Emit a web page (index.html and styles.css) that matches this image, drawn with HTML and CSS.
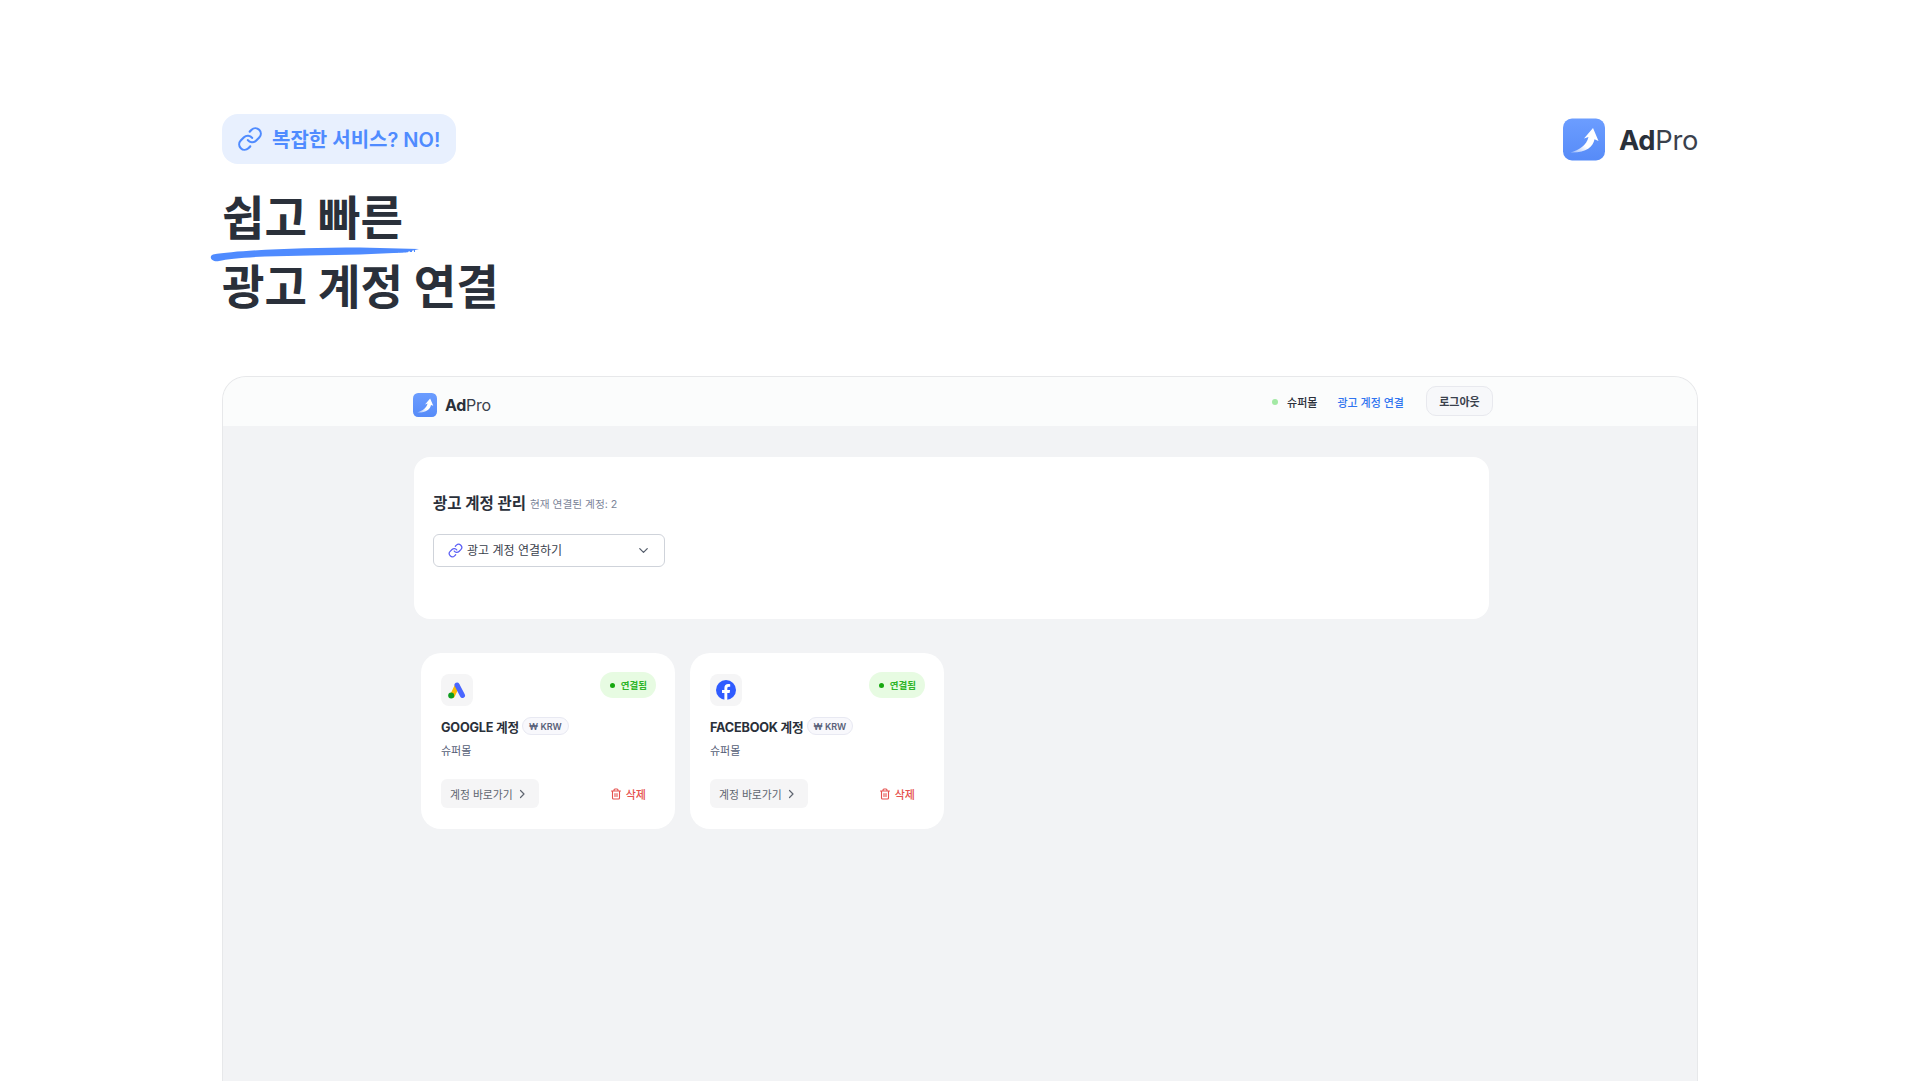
FILE: index.html
```html
<!DOCTYPE html>
<html lang="ko">
<head>
    <meta charset="UTF-8">
    <meta name="viewport" content="width=device-width, initial-scale=1.0">
    <title>AdPro</title>
    <link rel="stylesheet" href="styles.css">
</head>
<body>
    <svg width="0" height="0" class="defs">
        <defs>
            <linearGradient id="tile" x1="0" y1="0" x2="0" y2="1">
                <stop offset="0" stop-color="#6c9dff"/>
                <stop offset="1" stop-color="#568bf8"/>
            </linearGradient>
            <linearGradient id="tail" x1="0" y1="1" x2="1" y2="0">
                <stop offset="0" stop-color="#fff" stop-opacity="0.35"/>
                <stop offset="0.4" stop-color="#fff"/>
            </linearGradient>
            <symbol id="logo" viewBox="0 0 42 42">
                <rect width="42" height="42" rx="9" fill="url(#tile)"/>
                <path d="M30 9.500L35.500 22.500L31.500 20.800C30 28.500 23 34.500 7.500 34C16 31.500 23.500 27 25.500 18.500L21 20Z" fill="url(#tail)"/>
            </symbol>
            <symbol id="link" viewBox="0 0 24 24">
                <path d="M10 13a5 5 0 0 0 7.540.540l3-3a5 5 0 0 0-7.070-7.070l-1.720 1.710" fill="none" stroke="currentColor" stroke-width="2" stroke-linecap="round" stroke-linejoin="round"/>
                <path d="M14 11a5 5 0 0 0-7.540-.540l-3 3a5 5 0 0 0 7.070 7.070l1.710-1.710" fill="none" stroke="currentColor" stroke-width="2" stroke-linecap="round" stroke-linejoin="round"/>
            </symbol>
            <symbol id="trash" viewBox="0 0 24 24">
                <path d="M3 6h18M19 6v14a2 2 0 0 1-2 2H7a2 2 0 0 1-2-2V6M8 6V4a2 2 0 0 1 2-2h4a2 2 0 0 1 2 2v2M10 11v6M14 11v6" fill="none" stroke="currentColor" stroke-width="2.200" stroke-linecap="round" stroke-linejoin="round"/>
            </symbol>
            <symbol id="chev-right" viewBox="0 0 24 24">
                <path d="M9 5l7 7-7 7" fill="none" stroke="currentColor" stroke-width="2.400" stroke-linecap="round" stroke-linejoin="round"/>
            </symbol>
        </defs>
    </svg>

    <div class="page">
        <!-- Top section -->
        <div class="hero">
            <div>
                <div class="hero-badge">
                    <svg class="hero-badge-icon"><use href="#link"/></svg>
                    <span>복잡한 서비스? NO!</span>
                </div>
                <h1 class="hero-title">
                    <span class="hero-mark">쉽고 빠른
                        <svg class="brush" viewBox="0 0 210 15" width="210" height="15">
                            <path d="M3 7.500C30 3 90 .5 150 .5L209 2L195 5.500L150 7.500L100 8.500L55 9.500C35 10.500 17 12 9 14C2 15.500 -2 9.500 3 7.500Z" fill="#4f8bff"/>
                            <path d="M140 5L205 3.500" stroke="#4f8bff" stroke-width="3" stroke-dasharray="6 1 9 1 4 2 3 2 2 2" fill="none"/>
                        </svg>
                    </span><br>
                    광고 계정 연결
                </h1>
            </div>
            <div class="hero-logo">
                <svg class="hero-logo-icon"><use href="#logo"/></svg>
                <span class="wordmark"><b>Ad</b>Pro</span>
            </div>
        </div>

        <!-- App preview -->
        <div class="frame">
            <div class="topbar">
                <div class="topbar-inner">
                    <div class="app-logo">
                        <svg class="app-logo-icon"><use href="#logo"/></svg>
                        <span class="wordmark"><b>Ad</b>Pro</span>
                    </div>
                    <div class="nav">
                        <span class="nav-dot"></span>
                        <span class="nav-name">슈퍼몰</span>
                        <a class="nav-link">광고 계정 연결</a>
                        <button class="logout">로그아웃</button>
                    </div>
                </div>
            </div>

            <div class="content">
                <div class="panel">
                    <div class="panel-head">
                        <h2>광고 계정 관리</h2>
                        <span>현재 연결된 계정: 2</span>
                    </div>
                    <div class="connect">
                        <svg class="connect-icon"><use href="#link"/></svg>
                        <span>광고 계정 연결하기</span>
                        <svg class="connect-chev" viewBox="0 0 24 24"><path d="M6 9l6 6 6-6" fill="none" stroke="currentColor" stroke-width="2" stroke-linecap="round" stroke-linejoin="round"/></svg>
                    </div>
                </div>

                <div class="accounts">
                    <div class="account">
                        <div class="account-top">
                            <div class="account-icon">
                                <svg viewBox="0 0 20 20" width="20" height="20">
                                    <path d="M5.500 15.500L10 6" stroke="#fbbc04" stroke-width="5" stroke-linecap="round"/>
                                    <path d="M10 5L15.500 15.500" stroke="#4a66ff" stroke-width="5" stroke-linecap="round"/>
                                    <circle cx="4.200" cy="15.600" r="3" fill="#0f9d1f"/>
                                </svg>
                            </div>
                            <div class="status"><i></i>연결됨</div>
                        </div>
                        <div class="account-name">GOOGLE 계정 <span class="currency">₩ KRW</span></div>
                        <div class="account-shop">슈퍼몰</div>
                        <div class="account-actions">
                            <a class="go">계정 바로가기 <svg><use href="#chev-right"/></svg></a>
                            <a class="del"><svg><use href="#trash"/></svg>삭제</a>
                        </div>
                    </div>

                    <div class="account">
                        <div class="account-top">
                            <div class="account-icon">
                                <svg viewBox="0 0 20 20" width="20" height="20">
                                    <circle cx="10" cy="10" r="10" fill="#2f5bff"/>
                                    <path d="M8.400 20v-7H6v-3h2.400V8c0-2.500 1.500-3.900 3.700-3.900.8 0 1.600.1 2.100.2v2.500h-1.300c-1.200 0-1.600.8-1.600 1.500V10h2.800l-.5 3h-2.300v7z" fill="#fff"/>
                                </svg>
                            </div>
                            <div class="status"><i></i>연결됨</div>
                        </div>
                        <div class="account-name">FACEBOOK 계정 <span class="currency">₩ KRW</span></div>
                        <div class="account-shop">슈퍼몰</div>
                        <div class="account-actions">
                            <a class="go">계정 바로가기 <svg><use href="#chev-right"/></svg></a>
                            <a class="del"><svg><use href="#trash"/></svg>삭제</a>
                        </div>
                    </div>
                </div>
            </div>
        </div>
    </div>
</body>
</html>
```

FILE: styles.css
```css
html, body {
    margin: 0;
    height: 1081px;
    overflow: hidden;
    background-color: #fff;
}
body {
    font-family: Inter, "Noto Sans CJK KR", sans-serif;
    color: #2a303a;
}
.defs {
    display: block;
    height: 0;
}
.page {
    padding: 114px 222px 0;
}

/* hero */
.hero {
    display: flex;
    justify-content: space-between;
    align-items: flex-start;
}
.hero-badge {
    display: inline-flex;
    align-items: center;
    gap: 9px;
    box-sizing: border-box;
    width: 234px;
    height: 50px;
    padding: 0 0 2px 15px;
    border-radius: 16px;
    background-color: #e8f0fe;
    color: #4f8bff;
    font-size: 20px;
    font-weight: 600;
}
.hero-badge-icon {
    width: 26px;
    height: 26px;
    margin-top: 2px;
}
.hero-title {
    margin: 20px 0 0;
    font-size: 46.200px;
    line-height: 69px;
    font-weight: 700;
    color: #2a303a;
}
.hero-mark {
    position: relative;
}
.brush {
    position: absolute;
    left: -12px;
    top: 57px;
}
.hero-logo {
    display: flex;
    align-items: center;
    gap: 14px;
    margin-top: 4px;
}
.hero-logo-icon {
    width: 42px;
    height: 43px;
}
.hero-logo .wordmark {
    font-size: 27.300px;
    padding-top: 2px;
}
.wordmark {
    font-weight: 400;
    color: #3a414c;
    letter-spacing: -0.3px;
}
.wordmark b {
    font-weight: 700;
    color: #2a303a;
}

/* app frame */
.frame {
    margin-top: 54px;
    height: 704px;
    border: 1px solid #e7e8ea;
    border-bottom: none;
    border-radius: 24px 24px 0 0;
    background-color: #f2f3f5;
    overflow: hidden;
}
.topbar {
    height: 49px;
    padding-left: 190px;
    background-color: #fbfcfc;
}
.topbar-inner {
    width: 1080px;
    height: 100%;
    display: flex;
    justify-content: space-between;
    align-items: center;
}
.app-logo {
    display: flex;
    align-items: center;
    gap: 8px;
    margin-top: 6px;
}
.app-logo-icon {
    width: 24px;
    height: 24px;
}
.app-logo .wordmark {
    font-size: 16px;
    letter-spacing: -0.3px;
}
.nav {
    display: flex;
    align-items: center;
    font-size: 11px;
    font-weight: 500;
}
.nav-dot {
    width: 6px;
    height: 6px;
    border-radius: 50%;
    background-color: #a3e9a4;
    margin-right: 9px;
}
.nav-name {
    color: #2a303a;
    margin-right: 20px;
}
.nav-link {
    color: #2f74f0;
    margin-right: 22px;
}
.logout {
    width: 67px;
    height: 30px;
    margin-bottom: 2px;
    padding: 0;
    border: 1px solid #e8e9ee;
    border-radius: 10px;
    background-color: #f7f8fa;
    font-family: inherit;
    font-size: 11px;
    font-weight: 600;
    color: #3a414c;
}

/* content */
.content {
    padding: 31px 0 0 191px;
}
.panel {
    width: 1037px;
    height: 162px;
    padding: 0 19px;
    background-color: #fff;
    border-radius: 16px;
    overflow: hidden;
}
.panel-head {
    display: flex;
    align-items: center;
    gap: 4px;
    margin-top: 33px;
    height: 24px;
}
.panel-head h2 {
    margin: 0;
    font-size: 15.500px;
    font-weight: 700;
    color: #2a303a;
}
.panel-head span {
    margin-top: 2px;
    font-size: 10.700px;
    color: #7b8499;
}
.connect {
    display: flex;
    align-items: center;
    box-sizing: border-box;
    width: 232px;
    height: 33px;
    margin-top: 20px;
    padding: 0 13px 2px 14px;
    border: 1px solid #cfd3da;
    border-radius: 6px;
    font-size: 12px;
    color: #3a414c;
}
.connect-icon {
    width: 15px;
    height: 15px;
    margin-top: 2px;
    color: #5b5ff5;
    margin-right: 4px;
}
.connect-chev {
    width: 15px;
    height: 15px;
    margin-top: 2px;
    margin-left: auto;
    color: #555e6c;
}
.accounts {
    display: flex;
    gap: 15px;
    margin: 34px 0 0 7px;
}
.account {
    box-sizing: border-box;
    width: 254px;
    height: 176px;
    padding: 19px 19px 20px 20px;
    background-color: #fff;
    border-radius: 20px;
}
.account-top {
    display: flex;
    justify-content: space-between;
    align-items: flex-start;
}
.account-icon {
    display: flex;
    justify-content: center;
    align-items: center;
    width: 32px;
    height: 32px;
    margin-top: 2px;
    border-radius: 8px;
    background-color: #f5f5f6;
}
.status {
    display: flex;
    align-items: center;
    gap: 6px;
    height: 26px;
    padding: 0 9px 0 10px;
    border-radius: 13px;
    background-color: #e7fbe2;
    color: #2fb52a;
    font-size: 9.500px;
    font-weight: 700;
}
.status i {
    width: 5px;
    height: 5px;
    border-radius: 50%;
    background-color: #16a80f;
}
.account-name {
    display: flex;
    align-items: center;
    gap: 3px;
    height: 18px;
    margin-top: 11px;
    font-size: 12.700px;
    font-weight: 700;
    color: #2a303a;
    letter-spacing: -0.2px;
}
.currency {
    display: inline-flex;
    align-items: center;
    height: 16px;
    padding: 0 6px;
    border: 1px solid #e8e9f2;
    border-radius: 9px;
    background-color: #f8f8fc;
    font-size: 9px;
    font-weight: 600;
    color: #596179;
    letter-spacing: 0;
}
.account-shop {
    margin-top: 7px;
    height: 18px;
    line-height: 18px;
    font-size: 11px;
    color: #566077;
}
.account-actions {
    display: flex;
    justify-content: space-between;
    align-items: center;
    margin-top: 19px;
}
.go {
    display: flex;
    align-items: center;
    gap: 3px;
    box-sizing: border-box;
    width: 98px;
    height: 29px;
    padding: 0 9px;
    border-radius: 6px;
    background-color: #f5f5f6;
    font-size: 10.800px;
    color: #5f6570;
}
.go svg {
    width: 12px;
    height: 12px;
}
.del {
    display: flex;
    align-items: center;
    gap: 4px;
    margin-right: 10px;
    font-size: 11px;
    font-weight: 500;
    color: #e5514e;
}
.del svg {
    width: 12px;
    height: 12px;
}
```
